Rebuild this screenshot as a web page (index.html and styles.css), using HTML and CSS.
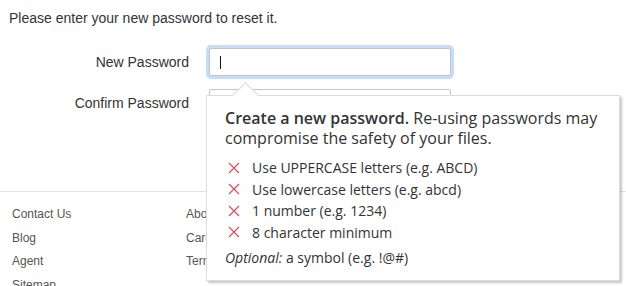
FILE: index.html
```html
<!DOCTYPE html>
<html lang="en">
<head>
  <meta charset="UTF-8">
  <meta name="viewport" content="width=device-width, initial-scale=1.0">
  <title>Reset Password</title>
  <link rel="stylesheet" href="styles.css">
</head>
<body>

  <div class="content">
    <p class="intro">Please enter your new password to reset it.</p>

    <div class="formRow">
      <label class="fieldLabel" for="newPassword">New Password</label>
      <div class="fieldWrap">
        <input type="password" id="newPassword" class="textInput focused">
        <span class="caret"></span>

        <div class="tip">
          <div class="tipArrow"></div>
          <p class="tipHead"><strong>Create a new password.</strong> Re-using passwords may compromise the safety of your files.</p>
          <ul class="rules">
            <li><svg class="cross" viewBox="0 0 12 12"><path d="M1 1 L11 11 M11 1 L1 11"/></svg>Use UPPERCASE letters (e.g. ABCD)</li>
            <li><svg class="cross" viewBox="0 0 12 12"><path d="M1 1 L11 11 M11 1 L1 11"/></svg>Use lowercase letters (e.g. abcd)</li>
            <li><svg class="cross" viewBox="0 0 12 12"><path d="M1 1 L11 11 M11 1 L1 11"/></svg>1 number (e.g. 1234)</li>
            <li><svg class="cross" viewBox="0 0 12 12"><path d="M1 1 L11 11 M11 1 L1 11"/></svg>8 character minimum</li>
          </ul>
          <p class="tipOptional"><em>Optional:</em> a symbol (e.g. !@#)</p>
        </div>
      </div>
    </div>

    <div class="formRow">
      <label class="fieldLabel" for="confirmPassword">Confirm Password</label>
      <div class="fieldWrap">
        <input type="password" id="confirmPassword" class="textInput">
      </div>
    </div>
  </div>

  <div class="footer">
    <ul class="footerCol">
      <li><a href="#">Contact Us</a></li>
      <li><a href="#">Blog</a></li>
      <li><a href="#">Agent</a></li>
      <li><a href="#">Sitemap</a></li>
    </ul>
    <ul class="footerCol">
      <li><a href="#">About</a></li>
      <li><a href="#">Careers</a></li>
      <li><a href="#">Terms</a></li>
    </ul>
  </div>

</body>
</html>
```

FILE: styles.css
```css
body {
  font-family: "Liberation Sans", Arial, sans-serif;
  margin: 0;
  background-color: #fff;
  color: #333;
  overflow: hidden;
}

.content {
  padding: 10px 0 0 9px;
  height: 181px;
}

.intro {
  margin: 0 0 22px;
  font-size: 14px;
  line-height: 16px;
}

.formRow {
  display: flex;
  align-items: center;
  margin-bottom: 13px;
}

.fieldLabel {
  width: 180px;
  margin-right: 20px;
  text-align: right;
  font-size: 14px;
}

.fieldWrap {
  position: relative;
}

.textInput {
  display: block;
  box-sizing: border-box;
  width: 242px;
  height: 28px;
  margin: 0;
  border: 1px solid #c4c4c4;
  border-radius: 2px;
  padding: 0 10px;
  background-color: #fff;
  outline: none;
}

.textInput.focused {
  box-shadow: 0 0 0 3px #c5dcfa;
}

.caret {
  position: absolute;
  left: 11px;
  top: 8px;
  width: 1px;
  height: 13px;
  background-color: #111;
}

/* password rules popover */
.tip {
  position: absolute;
  left: -3px;
  top: 47px;
  z-index: 2;
  width: 414px;
  box-sizing: border-box;
  padding: 12px 16px 12px 18px;
  background-color: #fff;
  border: 1px solid #dcdcdc;
  box-shadow: 2px 2px 2px rgba(0, 0, 0, 0.22);
  font-family: "Open Sans", sans-serif;
  color: #333;
}

.tipArrow {
  position: absolute;
  left: 29px;
  top: -10px;
  width: 18px;
  height: 18px;
  background-color: #fff;
  border-left: 1px solid #dcdcdc;
  border-top: 1px solid #dcdcdc;
  transform: rotate(45deg);
}

.tipHead {
  position: relative;
  margin: 0;
  font-size: 16px;
  line-height: 20px;
}

.tipHead strong {
  font-weight: 600;
}

.rules {
  list-style: none;
  margin: 9px 0 0;
  padding: 0;
  font-size: 14px;
  line-height: 21.5px;
}

.rules li {
  display: flex;
  align-items: center;
}

.cross {
  width: 12px;
  height: 12px;
  margin: 0 12px 0 3px;
  fill: none;
  stroke: #d2505c;
  stroke-width: 1.2;
}

.tipOptional {
  margin: 5px 0 0;
  font-size: 14px;
  line-height: 20px;
}

.footer {
  display: flex;
  border-top: 1px solid #e2e2e2;
  padding: 11px 0 0 12px;
}

.footerCol {
  list-style: none;
  margin: 0;
  padding: 0;
  width: 174px;
  font-size: 12px;
  line-height: 23.5px;
}

.footerCol a {
  color: #555;
  text-decoration: none;
}
```
